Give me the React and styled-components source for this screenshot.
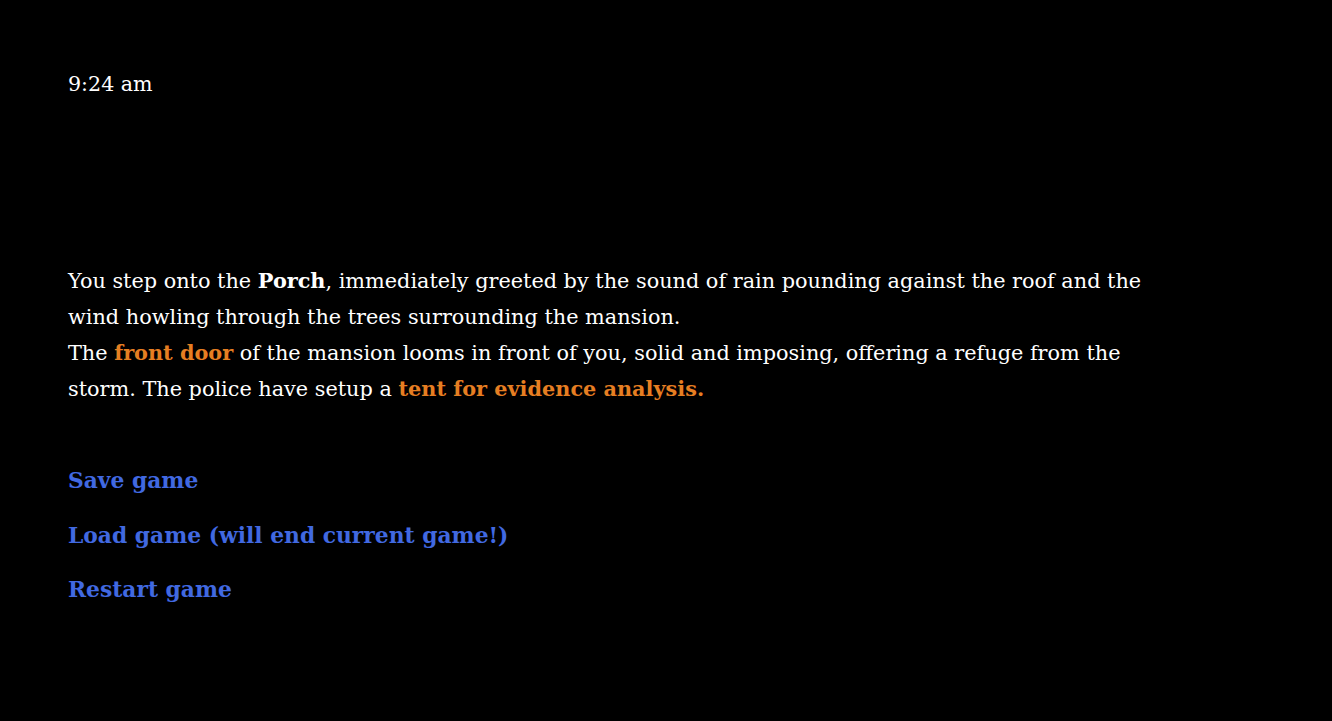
import React from "react";
import styled, { createGlobalStyle } from "styled-components";

const Global = createGlobalStyle`
  html, body { margin: 0; padding: 0; background: #000; }
  body { font-family: Georgia, "DejaVu Serif", serif; color: #fff; }
`;

const Page = styled.main`
  min-height: 721px;
  background: #000;
  padding: 70px 68px 0 68px;
  box-sizing: border-box;
`;

const Clock = styled.div`
  font-size: 20.6px;
  line-height: 28px;
`;

const Story = styled.div`
  margin-top: 165px;
  max-width: 1120px;
  font-size: 20.8px;
  line-height: 36px;
`;

const Line = styled.p`
  margin: 0;
`;

const Place = styled.strong`
  font-weight: bold;
  color: #fff;
`;

const Hot = styled.span`
  font-weight: bold;
  color: #e67e22;
  cursor: pointer;
`;

const Menu = styled.nav`
  margin-top: 56px;
  display: flex;
  flex-direction: column;
  gap: 18.5px;
`;

const MenuLink = styled.a`
  font-size: 21.8px;
  line-height: 36px;
  font-weight: bold;
  color: #4169e1;
  text-decoration: none;
  cursor: pointer;
  align-self: flex-start;
`;

export default function App() {
  return (
    <>
      <Global />
      <Page>
        <Clock>9:24 am</Clock>
        <Story>
          <Line>
            You step onto the <Place>Porch</Place>, immediately greeted by the sound of rain pounding against the roof and the wind howling through the trees surrounding the mansion.
          </Line>
          <Line>
            The <Hot>front door</Hot> of the mansion looms in front of you, solid and imposing, offering a refuge from the storm. The police have setup a <Hot>tent for evidence analysis.</Hot>
          </Line>
        </Story>
        <Menu>
          <MenuLink>Save game</MenuLink>
          <MenuLink>Load game (will end current game!)</MenuLink>
          <MenuLink>Restart game</MenuLink>
        </Menu>
      </Page>
    </>
  );
}
